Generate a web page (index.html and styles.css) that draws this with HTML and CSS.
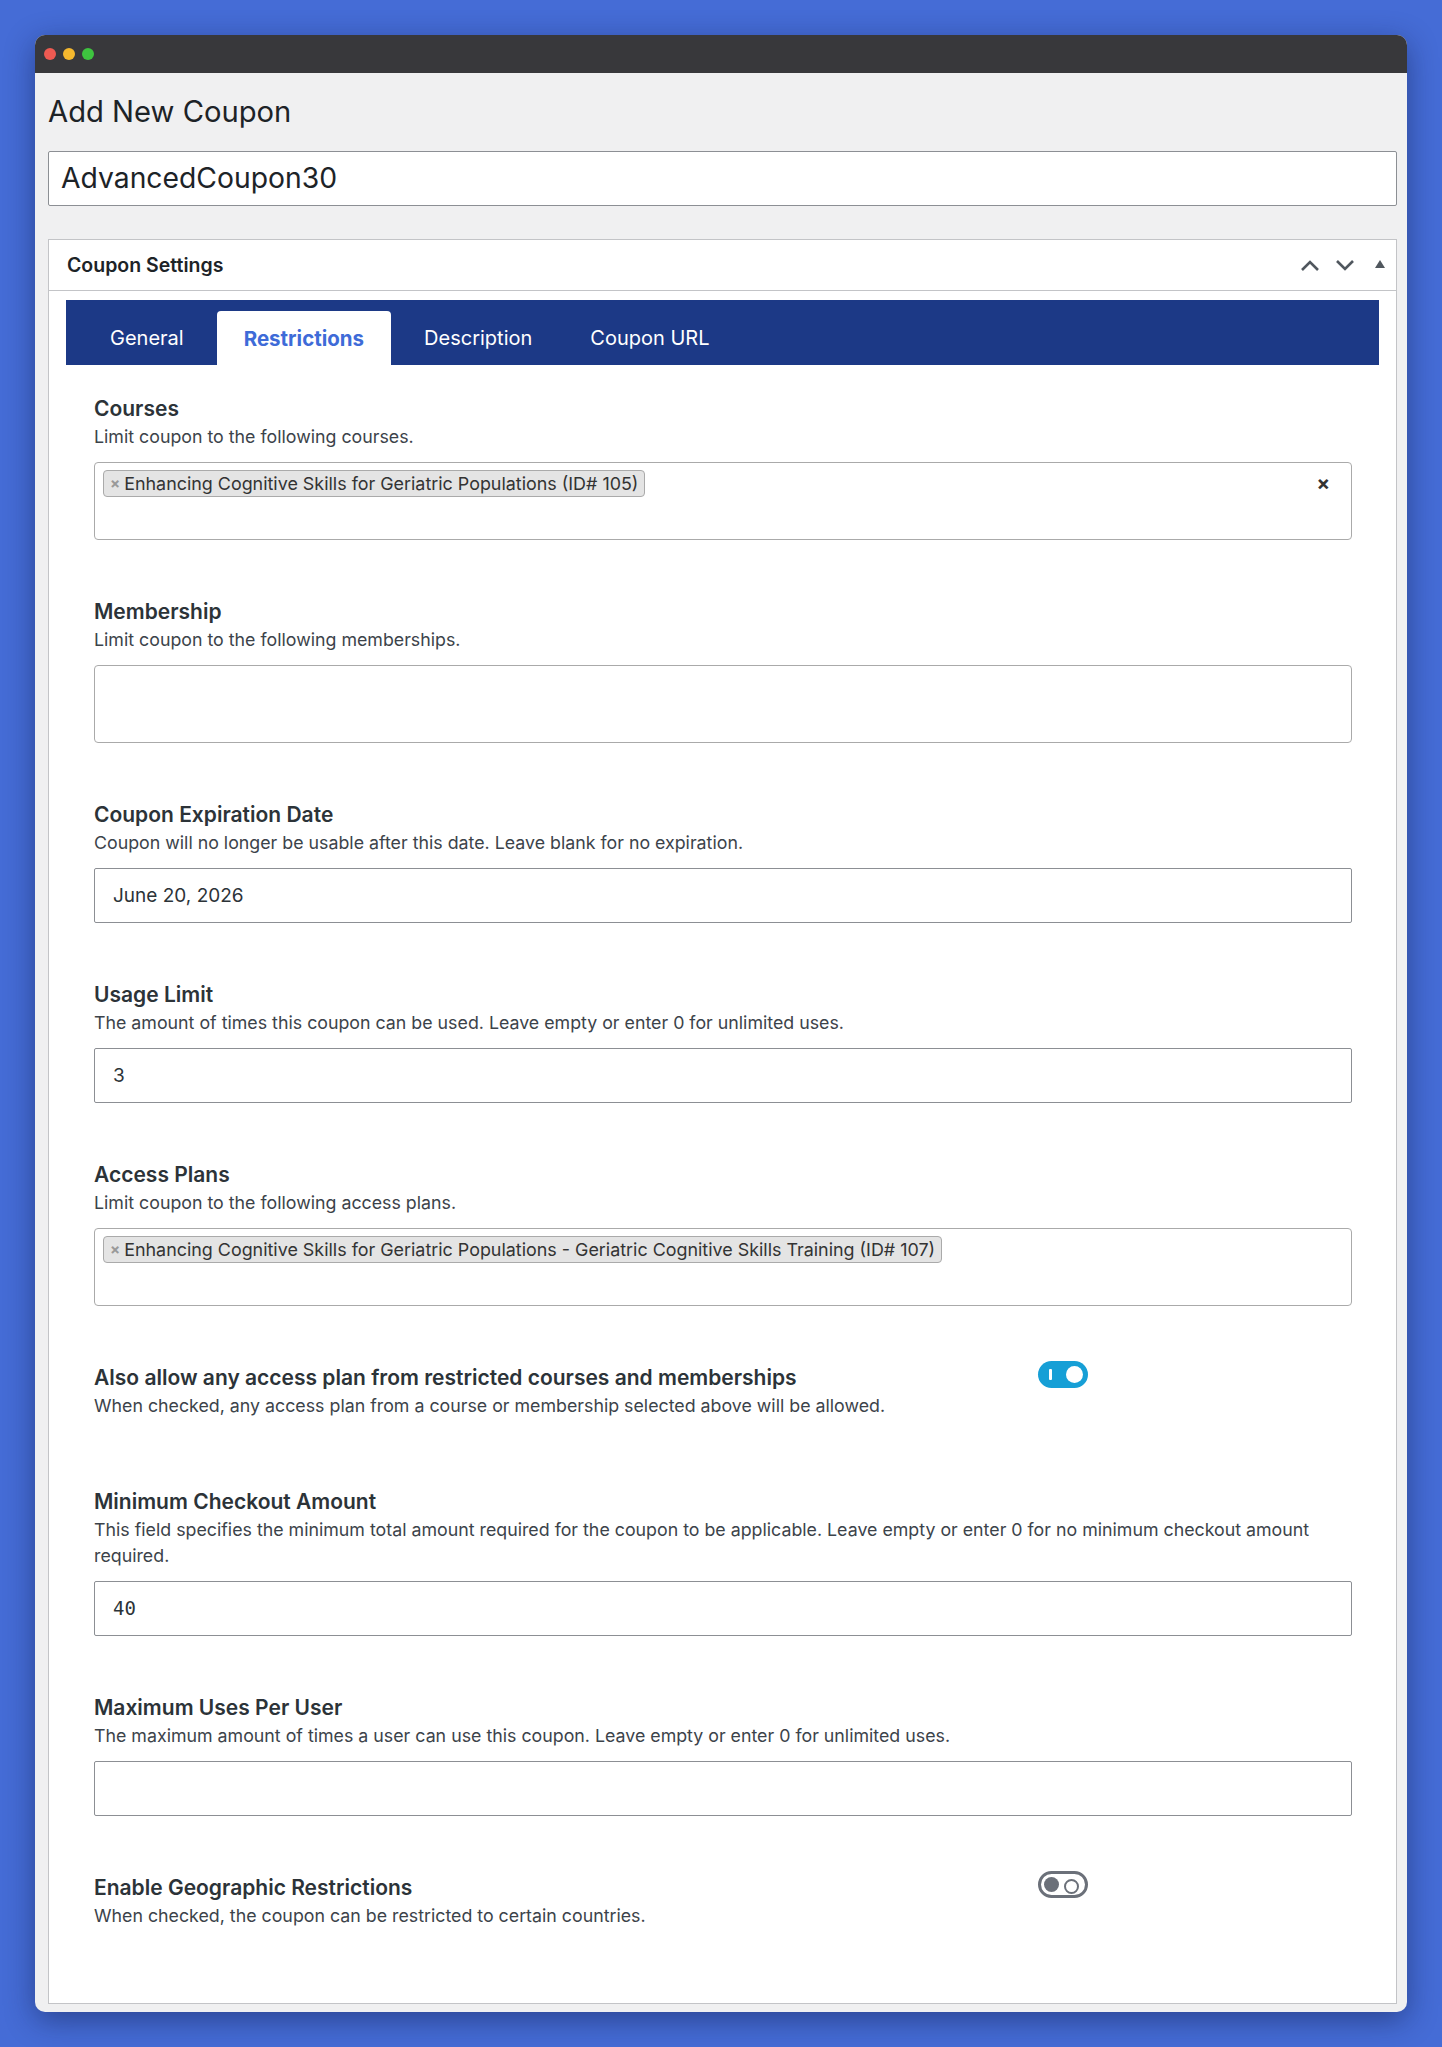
FILE: index.html
```html
<!DOCTYPE html>
<html lang="en">
<head>
<meta charset="utf-8">
<title>Add New Coupon</title>
<link rel="stylesheet" href="styles.css">
</head>
<body>
<div class="window">
  <div class="titlebar">
    <span class="dot red"></span><span class="dot yellow"></span><span class="dot green"></span>
  </div>
  <div class="content">
    <h1 class="page-title">Add New Coupon</h1>
    <div class="title-input">AdvancedCoupon30</div>

    <div class="panel">
      <div class="panel-header">
        <h2 class="panel-title">Coupon Settings</h2>
        <div class="panel-actions">
          <svg class="chev" width="22" height="14" viewBox="0 0 22 14"><polyline points="3,12 11,4 19,12" fill="none" stroke="#50575e" stroke-width="2.6"/></svg>
          <svg class="chev" width="22" height="14" viewBox="0 0 22 14"><polyline points="3,3 11,11 19,3" fill="none" stroke="#50575e" stroke-width="2.6"/></svg>
          <svg class="tri" width="12" height="10" viewBox="0 0 12 10"><polygon points="1,9 6,1 11,9" fill="#50575e"/></svg>
        </div>
      </div>
      <div class="panel-body">
        <ul class="tabs">
          <li class="tab">General</li>
          <li class="tab active">Restrictions</li>
          <li class="tab">Description</li>
          <li class="tab">Coupon URL</li>
        </ul>

        <div class="fields">
          <div class="field">
            <div class="label">Courses</div>
            <div class="desc">Limit coupon to the following courses.</div>
            <div class="select">
              <span class="chip"><span class="chip-x">×</span>Enhancing Cognitive Skills for Geriatric Populations (ID# 105)</span>
              <span class="clear">×</span>
            </div>
          </div>

          <div class="field">
            <div class="label">Membership</div>
            <div class="desc">Limit coupon to the following memberships.</div>
            <div class="select"></div>
          </div>

          <div class="field">
            <div class="label">Coupon Expiration Date</div>
            <div class="desc">Coupon will no longer be usable after this date. Leave blank for no expiration.</div>
            <div class="input">June 20, 2026</div>
          </div>

          <div class="field">
            <div class="label">Usage Limit</div>
            <div class="desc">The amount of times this coupon can be used. Leave empty or enter 0 for unlimited uses.</div>
            <div class="input">3</div>
          </div>

          <div class="field">
            <div class="label">Access Plans</div>
            <div class="desc">Limit coupon to the following access plans.</div>
            <div class="select">
              <span class="chip"><span class="chip-x">×</span>Enhancing Cognitive Skills for Geriatric Populations - Geriatric Cognitive Skills Training (ID# 107)</span>
            </div>
          </div>

          <div class="field toggle-field">
            <div class="toggle-text">
              <div class="label">Also allow any access plan from restricted courses and memberships</div>
              <div class="desc">When checked, any access plan from a course or membership selected above will be allowed.</div>
            </div>
            <div class="toggle-col"><span class="toggle on"></span></div>
          </div>

          <div class="field">
            <div class="label">Minimum Checkout Amount</div>
            <div class="desc">This field specifies the minimum total amount required for the coupon to be applicable. Leave empty or enter 0 for no minimum checkout amount required.</div>
            <div class="input mono">40</div>
          </div>

          <div class="field">
            <div class="label">Maximum Uses Per User</div>
            <div class="desc">The maximum amount of times a user can use this coupon. Leave empty or enter 0 for unlimited uses.</div>
            <div class="input"></div>
          </div>

          <div class="field toggle-field">
            <div class="toggle-text">
              <div class="label">Enable Geographic Restrictions</div>
              <div class="desc">When checked, the coupon can be restricted to certain countries.</div>
            </div>
            <div class="toggle-col"><span class="toggle off"></span></div>
          </div>
        </div>
      </div>
    </div>
  </div>
</div>
</body>
</html>
```

FILE: styles.css
```css
* { box-sizing: border-box; }

html, body {
  margin: 0;
  padding: 0;
}

body {
  background: #456cd6;
  font-family: Inter, "Noto Sans", "Liberation Sans", sans-serif;
  color: #2c3338;
  padding: 35px 35px 35px 35px;
}

.window {
  width: 1372px;
  border-radius: 10px;
  overflow: hidden;
  box-shadow: 0 8px 30px rgba(10, 20, 60, 0.45);
  background: #f0f0f1;
}

.titlebar {
  height: 38px;
  background: #38383b;
  display: flex;
  align-items: center;
  padding-left: 9px;
  gap: 7px;
}

.dot {
  width: 12px;
  height: 12px;
  border-radius: 50%;
  display: inline-block;
}
.dot.red { background: #ee5a52; }
.dot.yellow { background: #f5b82e; }
.dot.green { background: #3ec43f; }

.content {
  padding: 21px 10px 8px 13px;
}

.page-title {
  margin: 0 0 21px 0;
  font-size: 29.2px;
  line-height: 36px;
  font-weight: 400;
  color: #1d2327;
}

.title-input {
  height: 55px;
  background: #fff;
  border: 1px solid #8c8f94;
  border-radius: 2px;
  font-size: 28.3px;
  line-height: 53px;
  padding-left: 12px;
  color: #1d2327;
}

.panel {
  margin-top: 33px;
  background: #fff;
  border: 1px solid #c3c4c7;
}

.panel-header {
  height: 51px;
  border-bottom: 1px solid #c3c4c7;
  display: flex;
  align-items: center;
  justify-content: space-between;
  padding: 0 10px 0 18px;
}

.panel-title {
  margin: 0;
  font-size: 19.5px;
  font-weight: 600;
  color: #1d2327;
}

.panel-actions {
  display: flex;
  align-items: center;
  gap: 13px;
}
.panel-actions .tri { margin-left: 5px; margin-top: -3px; }

.panel-body {
  padding: 9px 17px 3px 17px;
}

.tabs {
  list-style: none;
  margin: 0;
  height: 65px;
  background: #1c3986;
  padding: 11px 0 0 19px;
  display: flex;
  gap: 8px;
}

.tab {
  height: 54px;
  padding: 0 25px;
  display: flex;
  align-items: center;
  font-size: 20px;
  color: #fff;
  border-radius: 4px 4px 0 0;
}

.tab.active {
  background: #fff;
  color: #3e6bd8;
  font-weight: 700;
  font-size: 20.5px;
  padding: 0 27px;
}

.fields {
  padding: 32px 27px 0 28px;
  display: flex;
  flex-direction: column;
}

.field {
  margin-bottom: 60px;
}

.label {
  font-size: 21px;
  line-height: 24px;
  font-weight: 600;
  color: #2c3338;
}

.desc {
  margin-top: 3px;
  font-size: 17.8px;
  line-height: 26px;
  color: #3c434a;
}

.select {
  margin-top: 12px;
  height: 78px;
  border: 1px solid #aaa;
  border-radius: 4px;
  padding: 7px 8px;
  display: flex;
  align-items: flex-start;
  justify-content: space-between;
}

.chip {
  display: inline-flex;
  align-items: center;
  height: 27px;
  background: #e4e4e4;
  border: 1px solid #aaa;
  border-radius: 4px;
  padding: 0 6px 0 6px;
  font-size: 17.9px;
  color: #333;
}

.chip-x {
  color: #999;
  font-weight: 700;
  font-size: 15px;
  margin-right: 4px;
}

.clear {
  font-size: 20px;
  font-weight: 700;
  color: #333;
  margin: 1px 13px 0 0;
  line-height: 24px;
}

.input {
  margin-top: 12px;
  height: 55px;
  border: 1px solid #8c8f94;
  border-radius: 2px;
  padding-left: 18px;
  font-size: 19px;
  line-height: 53px;
  color: #2c3338;
}

.input.mono {
  font-family: "DejaVu Sans Mono", "Liberation Mono", monospace;
  font-size: 19px;
}

.toggle-field {
  display: grid;
  grid-template-columns: 3fr 1fr;
  padding-bottom: 11px;
}

.toggle {
  display: block;
  position: relative;
  width: 50px;
  height: 27px;
  border-radius: 14px;
  margin-top: -5px;
}

.toggle.on {
  background: #169fd6;
}
.toggle.on::before {
  content: "";
  position: absolute;
  left: 11px;
  top: 8px;
  width: 3px;
  height: 11px;
  background: #fff;
  border-radius: 1px;
}
.toggle.on::after {
  content: "";
  position: absolute;
  right: 5px;
  top: 5px;
  width: 17px;
  height: 17px;
  border-radius: 50%;
  background: #fff;
}

.toggle.off {
  border: 3px solid #6b7079;
  background: #fff;
}
.toggle.off::before {
  content: "";
  position: absolute;
  left: 3px;
  top: 3px;
  width: 15px;
  height: 15px;
  border-radius: 50%;
  background: #6b7079;
}
.toggle.off::after {
  content: "";
  position: absolute;
  right: 6px;
  top: 5px;
  width: 11px;
  height: 11px;
  border-radius: 50%;
  border: 2px solid #6b7079;
}
```
